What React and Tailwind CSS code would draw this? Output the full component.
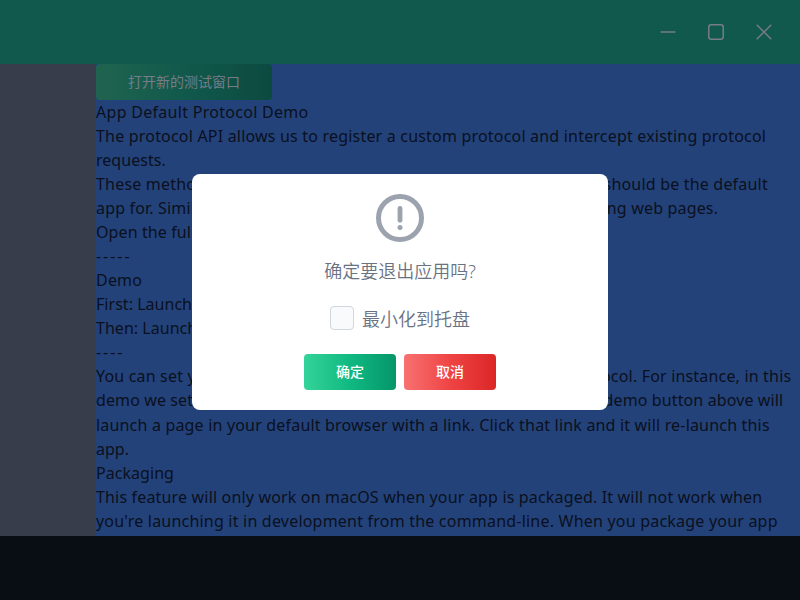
import React from "react";

const lines = [
  ["App Default Protocol Demo", "tracking-[0.29px]"],
  ["The protocol API allows us to register a custom protocol and intercept existing protocol", "tracking-[0.194px]"],
  ["requests.", "tracking-[0.03px]"],
  ["These methods allow you to set and unset the protocols your app should be the default", "tracking-[0.194px]"],
  ["app for. Similar to when a browser asks to be your default for viewing web pages.", "tracking-[0.17px]"],
  ["Open the full API documentation", "tracking-[0.1px]"],
  ["-----", "tracking-[1.95px]"],
  ["Demo", "tracking-[0.2px]"],
  ["First: Launch current page", "tracking-[0.03px]"],
  ["Then: Launch the app", "tracking-[0.03px]"],
  ["----", "tracking-[1.95px]"],
  ["You can set your app as the default app to open for a specific protocol. For instance, in this", "tracking-[0.178px]"],
  ["demo we set this app as the default for electron-api-demos://. The demo button above will", "tracking-[0.115px]"],
  ["launch a page in your default browser with a link. Click that link and it will re-launch this", "mt-px tracking-[0.184px]"],
  ["app.", "tracking-[0px]"],
  ["Packaging", "tracking-[0.05px]"],
  ["This feature will only work on macOS when your app is packaged. It will not work when", "tracking-[0.17px]"],
  ["you're launching it in development from the command-line. When you package your app", "tracking-[0.21px]"],
];

function TitleBar() {
  return (
    <header className="flex h-16 shrink-0 items-center justify-end bg-[#11594c] pr-3 text-[#777c86]">
      <div className="flex w-12 justify-center">
        <svg width="24" height="24" viewBox="0 0 24 24" fill="none" stroke="currentColor" strokeWidth="1.5" strokeLinecap="round"><path d="M5.2 12h13.6" /></svg>
      </div>
      <div className="flex w-12 justify-center">
        <svg width="24" height="24" viewBox="0 0 24 24" fill="none" stroke="currentColor" strokeWidth="1.5"><rect x="4.75" y="4.75" width="14.5" height="14.5" rx="2.4" /></svg>
      </div>
      <div className="flex w-12 justify-center">
        <svg width="24" height="24" viewBox="0 0 24 24" fill="none" stroke="currentColor" strokeWidth="1.5" strokeLinecap="round"><path d="M5.2 5.2l13.6 13.6M18.8 5.2L5.2 18.8" /></svg>
      </div>
    </header>
  );
}

function Dialog() {
  return (
    <div className="absolute left-48 top-[174px] flex h-[236px] w-[416px] flex-col items-center rounded-lg bg-white pt-5">
      <svg width="48" height="48" viewBox="0 0 48 48" fill="none" stroke="#9ca3af">
        <circle cx="24" cy="24" r="21.5" strokeWidth="5" />
        <path d="M24 14.3v12" strokeWidth="4.8" strokeLinecap="round" />
        <circle cx="24" cy="33.6" r="2.5" fill="#9ca3af" stroke="none" />
      </svg>
      <p className="mt-4 h-7 whitespace-nowrap text-lg font-[350] leading-[27px] text-gray-500">确定要退出应用吗?</p>
      <label className="mt-5 flex h-6 items-center gap-2 text-lg font-[350] text-gray-500">
        <span className="h-6 w-6 rounded border border-gray-300 bg-gray-50" />
        <span className="whitespace-nowrap pt-0.5 leading-6">最小化到托盘</span>
      </label>
      <div className="mt-6 flex gap-2">
        <button className="h-9 w-[92px] rounded bg-[linear-gradient(to_right,#34d399,#10b981,#059669)] text-sm font-medium text-white">确定</button>
        <button className="h-9 w-[92px] rounded bg-[linear-gradient(to_right,#f87171,#ef4444,#dc2626)] text-sm font-medium text-white">取消</button>
      </div>
    </div>
  );
}

export default function App() {
  return (
    <div className="relative flex h-[600px] w-[800px] flex-col overflow-hidden bg-[#090d14] font-['Noto_Sans','Noto_Sans_CJK_SC',sans-serif]">
      <TitleBar />
      <div className="flex h-[472px]">
        <aside className="w-24 shrink-0 bg-[#373d4a]" />
        <main className="min-w-0 flex-1 overflow-hidden bg-[#234279]">
          <button className="block h-9 w-44 rounded bg-[linear-gradient(to_right,#20644f,#11594c,#0c4a40)] text-sm text-[#777c86]">打开新的测试窗口</button>
          <div className="text-base leading-6 text-[#0a101e]">
            {lines.map(([text, spacing], i) => (
              <p key={i} className={`whitespace-nowrap ${spacing}`}>{text}</p>
            ))}
          </div>
        </main>
      </div>
      <Dialog />
    </div>
  );
}
